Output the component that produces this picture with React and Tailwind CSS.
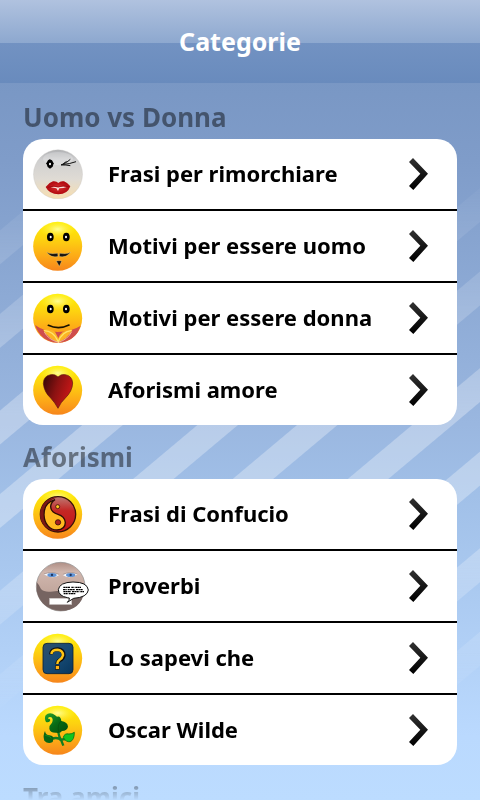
function BallGradients({ id }) {
  return (
    <defs>
      <linearGradient id={`${id}-base`} x1="0" y1="0" x2="0" y2="1">
        <stop offset="0" stopColor="#fff000" />
        <stop offset="0.35" stopColor="#fdd310" />
        <stop offset="0.7" stopColor="#fdaa17" />
        <stop offset="1" stopColor="#f6861c" />
      </linearGradient>
      <radialGradient id={`${id}-shine`} cx="0.5" cy="0.45" r="0.55">
        <stop offset="0" stopColor="#ffff9c" stopOpacity="0.95" />
        <stop offset="1" stopColor="#ffee30" stopOpacity="0" />
      </radialGradient>
    </defs>
  );
}

// all icons are drawn on the same 150 unit board, starting at 27,27
function Ball({ id, children }) {
  return (
    <svg viewBox="27 27 150 150" className="size-[50px] shrink-0" aria-hidden="true">
      <BallGradients id={id} />
      <circle cx="101" cy="103" r="73.5" fill={`url(#${id}-base)`} />
      <ellipse cx="101" cy="54" rx="50" ry="25" fill={`url(#${id}-shine)`} />
      {children}
    </svg>
  );
}

function Eyes() {
  return (
    <g>
      <ellipse cx="79" cy="75" rx="10" ry="13" fill="#000" />
      <ellipse cx="127" cy="75" rx="10" ry="13" fill="#000" />
      <ellipse cx="80" cy="75" rx="3" ry="4" fill="#fff" />
      <ellipse cx="126" cy="75" rx="3" ry="4" fill="#fff" />
    </g>
  );
}

function WinkIcon() {
  return (
    <svg viewBox="27 27 150 150" className="size-[50px] shrink-0" aria-hidden="true">
      <defs>
        <linearGradient id="wink-base" x1="0" y1="0" x2="0" y2="1">
          <stop offset="0" stopColor="#b0b1b4" />
          <stop offset="0.2" stopColor="#cfcfd0" />
          <stop offset="0.6" stopColor="#dfdbd4" />
          <stop offset="1" stopColor="#f8dfb0" />
        </linearGradient>
        <radialGradient id="wink-lips">
          <stop offset="0" stopColor="#d83030" />
          <stop offset="1" stopColor="#b0080e" />
        </radialGradient>
      </defs>
      <circle cx="102" cy="103" r="73.5" fill="url(#wink-base)" stroke="#c6c3c0" strokeWidth="1" />
      <ellipse cx="102" cy="56" rx="45" ry="20" fill="#fff" opacity="0.22" />
      <path d="M67 70 L72 61 L77 58 L84 61 L89 70 L86 80 L78 86 L71 81 Z" fill="#000" />
      <ellipse cx="78" cy="72" rx="3" ry="4" fill="#fff" />
      <path d="M111 75 Q130 68 139 58 M112 74 Q138 72 156 65 M112 75 Q126 74 139 77 M118 71 L128 64" fill="none" stroke="#111" strokeWidth="3" />
      <path d="M65 141 Q74 128 87 124 Q98 123 103 129 Q109 122 120 124 Q132 129 139 139 Q131 163 103 163 Q76 163 65 141 Z" fill="url(#wink-lips)" />
      <path d="M80 142 Q90 138 102 142 Q117 137 128 141 L118 144 L106 145 L102 153 L97 145 Z" fill="#fbe0d8" />
      <path d="M72 142 Q90 135 103 141 Q117 135 134 140" fill="none" stroke="#8e080c" strokeWidth="2" />
    </svg>
  );
}

function MoustacheIcon() {
  return (
    <Ball id="man">
      <Eyes />
      <path d="M68 121 Q77 127 101 124 L102 133 Q83 139 68 121 Z" fill="#181410" stroke="#e8ddb0" strokeWidth="1" />
      <path d="M140 121 Q131 127 107 124 L106 133 Q125 139 140 121 Z" fill="#181410" stroke="#e8ddb0" strokeWidth="1" />
      <path d="M97 147 Q105 145 113 147 L106 163 Z" fill="#181410" stroke="#e8ddb0" strokeWidth="1" />
    </Ball>
  );
}

function WomanIcon() {
  return (
    <Ball id="woman">
      <Eyes />
      <path d="M73 124 Q104 138 135 123" fill="none" stroke="#1a1200" strokeWidth="5" strokeLinecap="round" />
      <path d="M33 123 Q60 143 101 144 Q143 143 170 125 Q155 172 102 176 Q51 174 33 123 Z" fill="#cf4d4d" />
      <path d="M57 137 Q80 133 93 143 L103 163 Q112 136 145 138 Q130 165 102 174 Q75 165 57 137 Z" fill="#fcb423" />
      <path d="M60 140 Q88 140 103 173 Q113 143 143 139" fill="none" stroke="#ffe36b" strokeWidth="4" />
      <path d="M61 144 Q72 166 103 175 Q132 166 143 143" fill="none" stroke="#ffe5b8" strokeWidth="2" />
    </Ball>
  );
}

function HeartIcon() {
  return (
    <Ball id="love">
      <defs>
        <linearGradient id="love-heart" x1="0" y1="0.2" x2="1" y2="0.6">
          <stop offset="0" stopColor="#3c0808" />
          <stop offset="0.45" stopColor="#8a1212" />
          <stop offset="1" stopColor="#d01818" />
        </linearGradient>
      </defs>
      <path d="M102 63 Q93 53 80 56 Q58 60 58 83 Q61 109 80 126 Q93 140 102 157 Q110 139 124 126 Q145 106 146 81 Q144 59 124 56 Q111 53 102 63 Z" fill="url(#love-heart)" stroke="#5c1410" strokeWidth="2" />
    </Ball>
  );
}

function YinYangIcon() {
  return (
    <Ball id="tao">
      <defs>
        <linearGradient id="tao-red" x1="0" y1="0" x2="0" y2="1">
          <stop offset="0" stopColor="#bd7a74" />
          <stop offset="0.4" stopColor="#c42624" />
          <stop offset="1" stopColor="#c41414" />
        </linearGradient>
      </defs>
      <circle cx="102" cy="103" r="53" fill="url(#tao-red)" stroke="#3a1208" strokeWidth="4" />
      <path d="M99 52 A51 51 0 0 0 99 154 Q62 144 58 105 Q60 68 99 52 Z" fill="#7a1716" />
      <path d="M93 59 C68 66 60 84 60 104 C61 132 78 150 99 150 Q124 149 124 127 Q122 109 102 103 Q80 97 80 79 Q81 67 93 59 Z" fill="#ffb91f" stroke="#2b0d04" strokeWidth="4" />
      <circle cx="101" cy="80" r="6" fill="#ffc922" stroke="#3a1208" strokeWidth="2.5" />
      <circle cx="102" cy="127" r="8" fill="#a82020" stroke="#3a1208" strokeWidth="2.5" />
    </Ball>
  );
}

function ProverbIcon() {
  return (
    <svg viewBox="27 27 150 150" className="size-[50px] shrink-0 overflow-visible" aria-hidden="true">
      <defs>
        <linearGradient id="prov-skin" x1="0" y1="0" x2="0" y2="1">
          <stop offset="0" stopColor="#af8f86" />
          <stop offset="0.2" stopColor="#d0b6ad" />
          <stop offset="0.65" stopColor="#c0a59b" />
          <stop offset="1" stopColor="#99827a" />
        </linearGradient>
      </defs>
      <circle cx="110" cy="104" r="73" fill="url(#prov-skin)" stroke="#8c8c8c" strokeWidth="2" />
      <path d="M38 91 Q46 99 51 111 Q60 121 80 119 L106 116 L181 116 Q172 176 110 176 Q52 173 38 118 Z" fill="#766461" />
      <path d="M59 67 Q83 56 106 69 Q84 83 59 67 Z" fill="#f5f8fc" />
      <path d="M116 69 Q139 56 161 67 Q138 83 116 69 Z" fill="#f5f8fc" />
      <ellipse cx="84" cy="69" rx="14" ry="6" fill="#5f93d6" />
      <ellipse cx="140" cy="69" rx="14" ry="6" fill="#5f93d6" />
      <circle cx="84" cy="69" r="3.5" fill="#1d345e" />
      <circle cx="140" cy="69" r="3.5" fill="#1d345e" />
      <path d="M60 66 Q83 57 105 67 M117 67 Q139 57 160 66" fill="none" stroke="#8d7b78" strokeWidth="1.5" />
      <rect x="77" y="139" width="66" height="18" fill="#fff" stroke="#cfcac8" strokeWidth="2" />
      <path d="M130 137 Q104 132 103 113 Q106 91 147 90 Q190 90 193 114 Q190 136 149 139 L130 151 Q137 145 136 138 Z" fill="#fff" stroke="#111" strokeWidth="3" />
      <path d="M118 106 H139 M142 106 H151 M154 106 H171 M117 113 H128 M131 113 H153 M156 113 H177 M118 119 H141 M144 119 H166 M169 119 H180 M119 125 H131 M134 125 H154" stroke="#000" strokeWidth="4" strokeDasharray="6 1" />
    </svg>
  );
}

function QuestionIcon() {
  return (
    <Ball id="ask">
      <defs>
        <linearGradient id="ask-box" x1="0" y1="0" x2="1" y2="1">
          <stop offset="0" stopColor="#315168" />
          <stop offset="0.5" stopColor="#174b75" />
          <stop offset="1" stopColor="#08365d" />
        </linearGradient>
      </defs>
      <rect x="57" y="58" width="90" height="91" rx="12" fill="url(#ask-box)" stroke="#0b2239" strokeWidth="2.5" />
      <path d="M81 91 Q82 76 101 76 Q119 78 119 94 Q117 104 107 109 Q100 113 100 121" fill="none" stroke="#111" strokeWidth="12" />
      <path d="M82 90 Q84 77 101 77 Q117 79 117 94 Q115 103 106 108 Q100 112 100 120" fill="none" stroke="#ffc414" strokeWidth="7.5" />
      <rect x="94" y="125" width="12" height="11" fill="#ffb315" stroke="#111" strokeWidth="2" />
    </Ball>
  );
}

function LeafIcon() {
  return (
    <Ball id="leaf">
      <defs>
        <linearGradient id="leaf-green" x1="0" y1="0" x2="1" y2="1">
          <stop offset="0" stopColor="#25a52b" />
          <stop offset="0.5" stopColor="#086b15" />
          <stop offset="1" stopColor="#064d0c" />
        </linearGradient>
      </defs>
      <path d="M84 128 Q103 122 112 134 L118 149 M103 105 Q104 124 114 136 M112 130 Q124 132 132 122" fill="none" stroke="#137c1e" strokeWidth="7" />
      <path d="M66 78 Q60 67 65 58 Q73 49 86 53 Q94 57 99 62 Q110 58 112 75 Q131 78 132 92 Q130 104 114 105 Q108 113 97 110 Q78 111 76 98 Q75 88 84 80 Q89 70 82 64 Q72 61 72 69 Q76 66 79 72 Q77 81 66 78 Z" fill="url(#leaf-green)" />
      <path d="M112 75 Q99 84 104 108" fill="none" stroke="#064d0c" strokeWidth="2" />
      <path d="M63 105 Q56 118 61 134 Q72 146 86 138 L89 126 Q86 119 77 118 Q65 118 63 105 Z" fill="#086515" />
      <path d="M64 118 Q78 119 82 127" fill="none" stroke="#18a31f" strokeWidth="2" />
      <path d="M118 124 Q121 111 135 114 Q144 114 151 109 Q151 132 139 137 Q125 139 118 124 Z" fill="#14c51e" stroke="#087313" strokeWidth="2.5" />
    </Ball>
  );
}

function Chevron() {
  return (
    <svg viewBox="57 84 57 96" className="h-8 w-[19px] shrink-0" aria-hidden="true">
      <defs>
        <linearGradient id="chevron" x1="0" y1="0" x2="0" y2="1">
          <stop offset="0" stopColor="#333" />
          <stop offset="0.5" stopColor="#161616" />
          <stop offset="1" stopColor="#000" />
        </linearGradient>
      </defs>
      <path d="M69 84 L114 131 L70 180 L57 168 L91 131 L57 96 Z" fill="url(#chevron)" />
    </svg>
  );
}

const sections = [
  {
    title: 'Uomo vs Donna',
    items: [
      { label: 'Frasi per rimorchiare', Icon: WinkIcon },
      { label: 'Motivi per essere uomo', Icon: MoustacheIcon },
      { label: 'Motivi per essere donna', Icon: WomanIcon },
      { label: 'Aforismi amore', Icon: HeartIcon },
    ],
  },
  {
    title: 'Aforismi',
    items: [
      { label: 'Frasi di Confucio', Icon: YinYangIcon },
      { label: 'Proverbi', Icon: ProverbIcon },
      { label: 'Lo sapevi che', Icon: QuestionIcon },
      { label: 'Oscar Wilde', Icon: LeafIcon },
    ],
  },
  { title: 'Tra amici', items: [] },
];

function Section({ title, items }) {
  return (
    <section>
      <h2 className="h-[54px] pt-[14px] text-[26px] leading-[36px] text-black/45">{title}</h2>
      {items.length > 0 && (
        <ul className="overflow-hidden rounded-[20px] bg-white divide-y-2 divide-black">
          {items.map(({ label, Icon }) => (
            <li key={label}>
              <a href="#" className="flex h-[70px] items-center pr-[29px] pl-[10px] text-[22px] leading-[32px] text-black">
                <Icon />
                <span className="ml-[25px] flex-1 pb-0.5 whitespace-nowrap">{label}</span>
                <Chevron />
              </a>
            </li>
          ))}
        </ul>
      )}
    </section>
  );
}

export default function App() {
  return (
    <div className="grid h-screen grid-cols-1 grid-rows-1 overflow-hidden bg-[linear-gradient(#7393c1_0%,#7997c4_10%,#7f9cc9_20%,#9ab7e0_53%,#a1c0e8_62%,#bad9fe_92%,#bcdcff_100%)] font-['Noto_Sans',sans-serif] font-bold">
      <div className="col-start-1 row-start-1 bg-[repeating-linear-gradient(140deg,transparent_0px,transparent_38px,#fff_39px,#fff_64px,transparent_65px,transparent_102px,#fff_103px,#fff_128px,transparent_129px,transparent_138px)] opacity-30 mask-[linear-gradient(transparent_20%,black_52%,black_65%,transparent_90%)]" />
      <div className="col-start-1 row-start-1 flex min-h-0 flex-col">
        <header className="flex h-[83px] shrink-0 items-center justify-center bg-[linear-gradient(#b0c2df_0%,#8da8cf_52%,#7292c2_52%,#698bbd_100%)]">
          <h1 className="pb-0.5 text-[25px] leading-[36px] text-white">Categorie</h1>
        </header>
        <main className="min-h-0 flex-1 overflow-hidden px-[23px] pt-[2px] mask-[linear-gradient(to_top,transparent,black_20px)]">
          {sections.map((section) => (
            <Section key={section.title} {...section} />
          ))}
        </main>
      </div>
    </div>
  );
}
